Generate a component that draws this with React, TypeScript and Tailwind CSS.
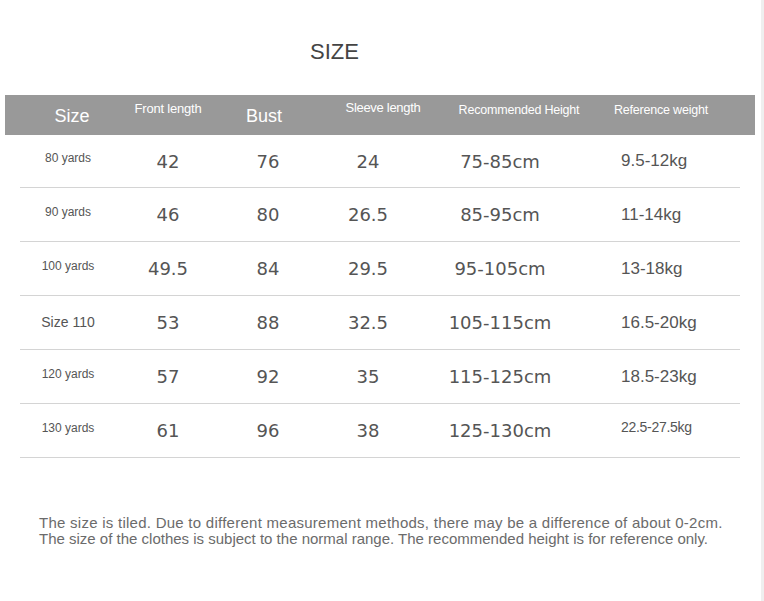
const narrow = { fontFamily: '"Liberation Sans Narrow", "Liberation Sans", Arial, sans-serif' };

type Row = { label: string; big?: boolean; front: string; bust: string; sleeve: string; height: string; weight: string; small?: boolean };

const rows: Row[] = [
  { label: "80 yards", front: "42", bust: "76", sleeve: "24", height: "75-85cm", weight: "9.5-12kg" },
  { label: "90 yards", front: "46", bust: "80", sleeve: "26.5", height: "85-95cm", weight: "11-14kg" },
  { label: "100 yards", front: "49.5", bust: "84", sleeve: "29.5", height: "95-105cm", weight: "13-18kg" },
  { label: "Size 110", big: true, front: "53", bust: "88", sleeve: "32.5", height: "105-115cm", weight: "16.5-20kg" },
  { label: "120 yards", front: "57", bust: "92", sleeve: "35", height: "115-125cm", weight: "18.5-23kg" },
  { label: "130 yards", front: "61", bust: "96", sleeve: "38", height: "125-130cm", weight: "22.5-27.5kg", small: true },
];

function Num({ w, children }: { w: string; children: React.ReactNode }) {
  return (
    <div className={`${w} flex justify-center whitespace-nowrap text-[18px] text-[#555]`} style={{ fontFamily: '"DejaVu Sans", Verdana, sans-serif' }}>
      {children}
    </div>
  );
}

export default function App() {
  return (
    <div className="flex h-[601px] w-[764px] bg-white">
      <div className="w-[761px]">
        <h1 className="pt-[39px] text-center text-[22px] leading-[26px] text-[#444]" style={narrow}>
          <span className="relative left-[-46px]">SIZE</span>
        </h1>

        <div className="ml-[5px] mt-[30px] flex h-[40px] w-[750px] items-center bg-[#999999] text-white" style={narrow}>
          <div className="flex w-[134px] justify-center pt-[2px] text-[18px]">Size</div>
          <div className="flex w-[58px] justify-center whitespace-nowrap pb-[12px] text-[13px] tracking-[-0.2px]">Front length</div>
          <div className="flex w-[134px] justify-center pt-[2px] text-[18px]">Bust</div>
          <div className="flex w-[104px] justify-center whitespace-nowrap pb-[14px] text-[13px] tracking-[-0.3px]">Sleeve length</div>
          <div className="flex w-[168px] justify-center whitespace-nowrap pb-[10px] text-[12.5px] tracking-[-0.2px]">Recommended Height</div>
          <div className="flex w-[116px] justify-center whitespace-nowrap pb-[10px] text-[12.5px] tracking-[-0.2px]">Reference weight</div>
        </div>

        <div className="ml-[20px] w-[720px]">
          {rows.map((r) => (
            <div key={r.label} className="flex h-[54px] items-center border-b border-[#d4d4d4] first:h-[53px]">
              <div
                className={`flex w-[96px] justify-center whitespace-nowrap text-[#555] ${r.big ? "text-[14px]" : "pb-[6px] text-[12px]"}`}
                style={{ fontFamily: '"Liberation Sans", Arial, sans-serif' }}
              >
                {r.label}
              </div>
              <Num w="w-[104px]">{r.front}</Num>
              <Num w="w-[96px]">{r.bust}</Num>
              <Num w="w-[104px]">{r.sleeve}</Num>
              <Num w="w-[160px]">{r.height}</Num>
              <div
                className={`whitespace-nowrap pl-[41px] text-[#555] ${r.small ? "pb-[6px] text-[14px] tracking-[-0.3px]" : "text-[17px]"}`}
                style={{ fontFamily: '"Liberation Sans", Arial, sans-serif' }}
              >
                {r.weight}
              </div>
            </div>
          ))}
        </div>

        <div className="mt-[57px] pl-[39px] text-[15px] leading-[16px] text-[#6b6b6b]" style={narrow}>
          <p className="tracking-[0.26px]">The size is tiled. Due to different measurement methods, there may be a difference of about 0-2cm.</p>
          <p>The size of the clothes is subject to the normal range. The recommended height is for reference only.</p>
        </div>
      </div>
      <div className="w-[3px] bg-[#efefef]" />
    </div>
  );
}
